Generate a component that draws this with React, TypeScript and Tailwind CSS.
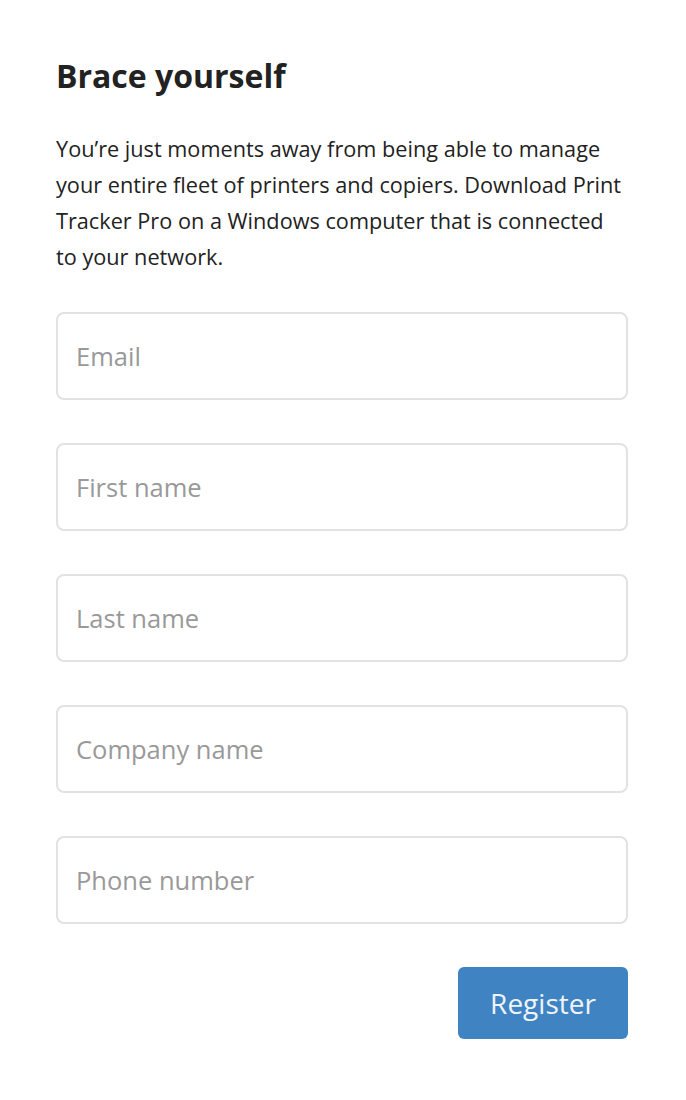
const fields = ['Email', 'First name', 'Last name', 'Company name', 'Phone number'];

export default function App() {
  return (
    <div className="min-h-[1100px] bg-white pl-[56px] pr-[58px] pt-[52px] font-['Open_Sans',sans-serif] text-[#222]">
      <h1 className="text-[32px] font-bold leading-[48px]">Brace yourself</h1>
      <p className="mt-[31px] text-[21.7px] leading-[36px]">
        You’re just moments away from being able to manage your entire fleet of printers and copiers. Download Print
        Tracker Pro on a Windows computer that is connected to your network.
      </p>
      <form className="mt-[37px] flex flex-col gap-[43px]">
        {fields.map((f) => (
          <input
            key={f}
            type="text"
            placeholder={f}
            className="h-[88px] w-full rounded-[8px] border-2 border-[#e2e2e2] px-[18px] text-[25.5px] text-[#222] outline-none placeholder:text-[#999]"
          />
        ))}
        <div className="flex justify-end">
          <button
            type="button"
            className="h-[72px] w-[170px] rounded-[6px] bg-[#3f83c2] text-[28px] text-[#eef4fa]"
          >
            Register
          </button>
        </div>
      </form>
    </div>
  );
}
